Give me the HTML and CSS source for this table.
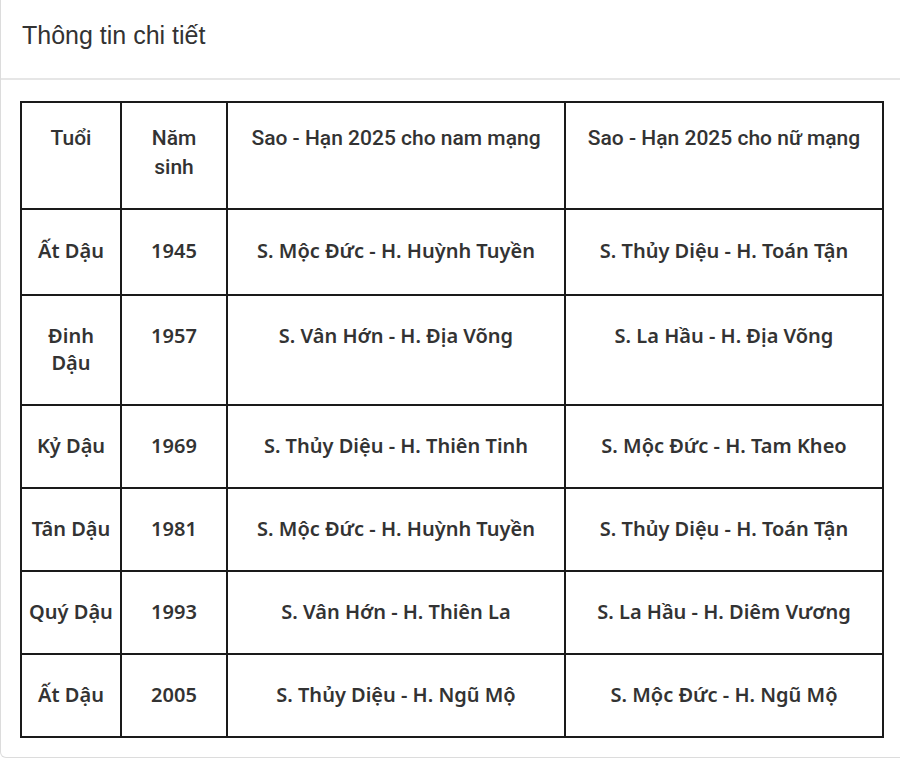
FILE: index.html
```html
<!DOCTYPE html>
<html lang="vi">
<head>
<meta charset="utf-8">
<title>Thông tin chi tiết</title>
<link rel="stylesheet" href="styles.css">
</head>
<body>
<div class="card">
  <div class="card-header">Thông tin chi tiết</div>
  <div class="card-body">
    <table class="info-table">
      <colgroup>
        <col class="c-age"><col class="c-year"><col class="c-male"><col class="c-female">
      </colgroup>
      <thead>
        <tr>
          <th>Tuổi</th>
          <th>Năm sinh</th>
          <th>Sao - Hạn 2025 cho nam mạng</th>
          <th>Sao - Hạn 2025 cho nữ mạng</th>
        </tr>
      </thead>
      <tbody>
        <tr class="first">
          <td>Ất Dậu</td><td>1945</td><td>S. Mộc Đức - H. Huỳnh Tuyền</td><td>S. Thủy Diệu - H. Toán Tận</td>
        </tr>
        <tr>
          <td>Đinh Dậu</td><td>1957</td><td>S. Vân Hớn - H. Địa Võng</td><td>S. La Hầu - H. Địa Võng</td>
        </tr>
        <tr>
          <td>Kỷ Dậu</td><td>1969</td><td>S. Thủy Diệu - H. Thiên Tinh</td><td>S. Mộc Đức - H. Tam Kheo</td>
        </tr>
        <tr>
          <td>Tân Dậu</td><td>1981</td><td>S. Mộc Đức - H. Huỳnh Tuyền</td><td>S. Thủy Diệu - H. Toán Tận</td>
        </tr>
        <tr>
          <td>Quý Dậu</td><td>1993</td><td>S. Vân Hớn - H. Thiên La</td><td>S. La Hầu - H. Diêm Vương</td>
        </tr>
        <tr>
          <td>Ất Dậu</td><td>2005</td><td>S. Thủy Diệu - H. Ngũ Mộ</td><td>S. Mộc Đức - H. Ngũ Mộ</td>
        </tr>
      </tbody>
    </table>
  </div>
</div>
</body>
</html>
```

FILE: styles.css
```css
html, body {
  margin: 0;
  padding: 0;
  background: #ffffff;
}

body {
  font-family: "Liberation Sans", Arial, sans-serif;
  color: #333333;
  overflow: hidden;
}

.card {
  width: 910px;
  height: 758px;
  box-sizing: border-box;
  border: 1px solid #dcdcdc;
  border-top: none;
  border-radius: 0 0 6px 6px;
  background: #ffffff;
}

.card-header {
  height: 80px;
  box-sizing: border-box;
  padding: 20px 21px 0;
  font-size: 25px;
  line-height: 30px;
  color: #333333;
  border-bottom: 2px solid #e6e6e6;
}

.card-body {
  padding: 21px 0 0 19px;
}

.info-table {
  width: 862px;
  border-collapse: collapse;
  table-layout: fixed;
  border: 2px solid #1a1a1a;
}

.c-age { width: 100px; }
.c-year { width: 106px; }
.c-male { width: 338px; }
.c-female { width: 318px; }

.info-table th,
.info-table td {
  border: 2px solid #1a1a1a;
  text-align: center;
  vertical-align: top;
  color: #333333;
}

.info-table th {
  font-family: Roboto, "Liberation Sans", sans-serif;
  font-weight: 500;
  font-size: 21px;
  line-height: 29px;
  padding: 21px 10px 26px;
}

.info-table td {
  font-family: "Noto Sans", "Open Sans", sans-serif;
  font-weight: 600;
  font-size: 20px;
  line-height: 27px;
  padding: 26px 6px 28px;
}

.info-table tr.first td {
  padding-top: 27px;
  padding-bottom: 30px;
}
```
